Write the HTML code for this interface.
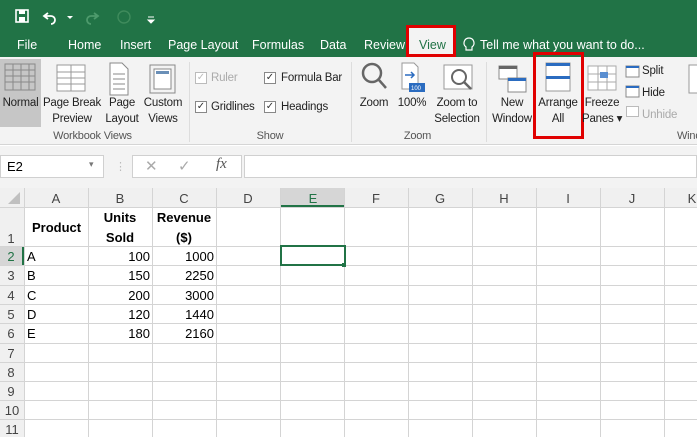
<!DOCTYPE html>
<html><head><meta charset="utf-8"><style>
*{margin:0;padding:0;box-sizing:border-box}
body{width:697px;height:437px;overflow:hidden;position:relative;font-family:"Liberation Sans",Arial,sans-serif;background:#fff}
.a{position:absolute}
.t{position:absolute;color:#fff;font-size:12.5px;top:38px;white-space:nowrap}
.r{position:absolute;font-size:11.5px;color:#222;text-align:center;line-height:16px;white-space:nowrap;letter-spacing:-0.2px}
.g{color:#555;font-size:11px}
.cb{position:absolute;width:12px;height:12px;border:1px solid #888;background:#fff;font-size:10px;line-height:10px;text-align:center;color:#333}
</style></head><body>
<div class="a" style="left:0;top:0;width:697px;height:57px;background:#217346"></div>
<svg class="a" style="left:14px;top:8px" width="150" height="18">
<rect x="2" y="2" width="12" height="12" fill="none" stroke="#fff" stroke-width="1.6"/><rect x="5" y="2" width="6" height="4" fill="#fff"/><rect x="5" y="9" width="6" height="5" fill="#fff"/>
<path d="M34 5 l-4 3 l4 3 M30 8 h7 a4 4 0 0 1 0 8" fill="none" stroke="#fff" stroke-width="1.8"/>
<path d="M53 8 l3 3 l3 -3z" fill="#fff"/>
<path d="M80 5 l4 3 l-4 3 M84 8 h-7 a4 4 0 0 0 0 8" fill="none" stroke="#4d9a6c" stroke-width="1.8"/>
<circle cx="110" cy="9" r="6" fill="none" stroke="#3f8b5c" stroke-width="1.4"/>
<path d="M134 9 h6 M134 12 l3 3 l3 -3z" stroke="#fff" fill="#fff"/>
</svg>
<div class="t" style="left:17px">File</div>
<div class="t" style="left:68px">Home</div>
<div class="t" style="left:120px">Insert</div>
<div class="t" style="left:168px">Page Layout</div>
<div class="t" style="left:252px">Formulas</div>
<div class="t" style="left:320px">Data</div>
<div class="t" style="left:364px">Review</div>
<div class="a" style="left:406px;top:25px;width:50px;height:32px;background:#f3f3f3"></div>
<div class="t" style="left:419px;color:#217346">View</div>
<div class="a" style="left:406px;top:25px;width:50px;height:32px;border:3px solid #e00000"></div>
<svg class="a" style="left:462px;top:37px" width="14" height="16"><path d="M7 1a5 5 0 0 0-3 9v3h6v-3a5 5 0 0 0-3-9z" fill="none" stroke="#fff" stroke-width="1.2"/></svg>
<div class="t" style="left:480px">Tell me what you want to do...</div>
<div class="a" style="left:0;top:57px;width:697px;height:88px;background:#f3f3f3;border-bottom:1px solid #d5d5d5"></div>
<div class="a" style="left:0;top:59px;width:41px;height:68px;background:#c6c6c6"></div>
<svg class="a" style="left:0;top:60px" width="697" height="40">
<g fill="none" stroke="#888"><rect x="5" y="4" width="30" height="26"/><path d="M5 10h30M5 16h30M5 22h30M13 4v26M21 4v26M29 4v26"/></g>
<g fill="none" stroke="#999"><rect x="57" y="5" width="28" height="26" fill="#fff"/><path d="M71 5v26M57 12h28M57 18h28M57 24h28"/></g>
<g fill="none" stroke="#888"><path d="M110 3h12l6 6v26h-18z" fill="#fff"/><path d="M113 14h12M113 19h12M113 24h12M113 29h12"/></g>
<g fill="none" stroke="#888"><rect x="150" y="5" width="25" height="28"/><rect x="154" y="9" width="17" height="20" fill="#fff"/><rect x="156" y="11" width="13" height="3" fill="#6a8fb7" stroke="none"/></g>
<g fill="none" stroke="#666" stroke-width="2.5"><circle cx="372" cy="13" r="9"/><path d="M379 20l7 8"/></g>
<g><path d="M402 3h12l4 4v22h-16z" fill="#fff" stroke="#999"/><path d="M405 15h9m-3-3l3 3l-3 3" stroke="#2b6cc0" fill="none" stroke-width="1.5"/><rect x="409" y="23" width="16" height="9" fill="#2b6cc0"/><text x="411" y="30" font-size="6" fill="#fff" font-family="Liberation Sans">100</text></g>
<g fill="none" stroke="#999"><rect x="444" y="5" width="28" height="24" fill="#fff"/><circle cx="459" cy="17" r="7" stroke="#666" stroke-width="2"/><path d="M464 22l7 7" stroke="#666" stroke-width="2.5"/></g>
<g fill="#fff" stroke="#888"><rect x="499" y="6" width="18" height="13"/><rect x="508" y="18" width="18" height="14"/><rect x="508" y="18" width="18" height="3" fill="#2b6cc0" stroke="none"/><rect x="499" y="6" width="18" height="3" fill="#666" stroke="none"/></g>
<g fill="#fff" stroke="#999"><rect x="546" y="3" width="24" height="28"/><rect x="546" y="3" width="24" height="3" fill="#2b6cc0" stroke="none"/><rect x="546" y="16" width="24" height="3" fill="#2b6cc0" stroke="none"/></g>
<g fill="#fff" stroke="#aaa"><rect x="588" y="6" width="28" height="24"/><path d="M588 14h28M588 22h28M598 6v24M607 6v24"/><rect x="600" y="12" width="8" height="6" fill="#5a8ed0" stroke="none"/></g>
<g fill="#fff" stroke="#888"><rect x="626" y="6" width="13" height="11"/><rect x="626" y="6" width="13" height="2" fill="#2b6cc0" stroke="none"/><rect x="626" y="26" width="13" height="11"/><rect x="626" y="26" width="13" height="2" fill="#2b6cc0" stroke="none"/></g>
<rect x="689" y="5" width="10" height="28" fill="#fff" stroke="#999"/>
</svg>
<div class="a" style="left:626px;top:106px;width:13px;height:11px;border:1px solid #bbb;background:#fff"></div>
<div class="r" style="left:0;top:95px;width:41px">Normal</div>
<div class="r" style="left:41px;top:95px;width:62px">Page Break<br>Preview</div>
<div class="r" style="left:103px;top:95px;width:38px">Page<br>Layout</div>
<div class="r" style="left:141px;top:95px;width:44px">Custom<br>Views</div>
<div class="r g" style="left:40px;top:128px;width:105px">Workbook Views</div>
<div class="a" style="left:189px;top:62px;width:1px;height:80px;background:#ddd"></div>
<div class="cb" style="left:195px;top:72px;border-color:#bbb;color:#bbb">✓</div><div class="r" style="left:211px;top:70px;color:#aaa">Ruler</div>
<div class="cb" style="left:264px;top:72px">✓</div><div class="r" style="left:281px;top:70px">Formula Bar</div>
<div class="cb" style="left:195px;top:101px">✓</div><div class="r" style="left:211px;top:99px">Gridlines</div>
<div class="cb" style="left:264px;top:101px">✓</div><div class="r" style="left:281px;top:99px">Headings</div>
<div class="r g" style="left:250px;top:128px;width:40px">Show</div>
<div class="a" style="left:351px;top:62px;width:1px;height:80px;background:#ddd"></div>
<div class="r" style="left:355px;top:95px;width:38px">Zoom</div>
<div class="r" style="left:396px;top:95px;width:32px">100%</div>
<div class="r" style="left:430px;top:95px;width:54px">Zoom to<br>Selection</div>
<div class="r g" style="left:395px;top:128px;width:45px">Zoom</div>
<div class="a" style="left:486px;top:62px;width:1px;height:80px;background:#ddd"></div>
<div class="r" style="left:487px;top:95px;width:50px">New<br>Window</div>
<div class="r" style="left:536px;top:95px;width:44px">Arrange<br>All</div>
<div class="a" style="left:533px;top:52px;width:51px;height:87px;border:3px solid #e00000"></div>
<div class="r" style="left:582px;top:95px;width:40px">Freeze<br>Panes ▾</div>
<div class="r" style="left:642px;top:63px">Split</div>
<div class="r" style="left:642px;top:85px">Hide</div>
<div class="r" style="left:642px;top:107px;color:#aaa">Unhide</div>
<div class="r g" style="left:677px;top:128px">Wind</div>
<div class="a" style="left:0;top:146px;width:697px;height:42px;background:#f3f3f3"></div>
<div class="a" style="left:0;top:155px;width:104px;height:23px;background:#fff;border:1px solid #d0d0d0;font-size:13px;padding:3px 6px">E2<span style="position:absolute;left:88px;top:3px;font-size:9px;color:#777">▾</span></div>
<div class="a" style="left:115px;top:160px;color:#bbb;font-size:11px">⋮</div>
<div class="a" style="left:132px;top:155px;width:110px;height:23px;background:#fff;border:1px solid #d0d0d0"></div>
<div class="a" style="left:145px;top:157px;color:#aaa;font-size:15px">✕</div>
<div class="a" style="left:178px;top:157px;color:#aaa;font-size:15px">✓</div>
<div class="a" style="left:216px;top:156px;color:#555;font-size:15px;font-style:italic;font-family:'Liberation Serif',serif">fx</div>
<div class="a" style="left:244px;top:155px;width:453px;height:23px;background:#fff;border:1px solid #d0d0d0"></div>
<svg class="a" style="left:0;top:188px" width="697" height="249">
<rect x="0" y="0" width="697" height="19" fill="#f0f0f0"/>
<rect x="0" y="0" width="24" height="249" fill="#f0f0f0"/>
<rect x="281" y="0" width="64" height="19" fill="#d6d6d6"/><rect x="281" y="17" width="64" height="2" fill="#217346"/>
<rect x="0" y="58" width="24" height="19" fill="#d6d6d6"/><rect x="22" y="58" width="2" height="19" fill="#217346"/>
<path d="M20 4 L20 16 L8 16z" fill="#c0c0c0"/>
<g stroke="#d4d4d4" stroke-width="1">
<path d="M24.5 0V249M88.5 0V249M152.5 0V249M216.5 0V249M280.5 0V249M344.5 0V249M408.5 0V249M472.5 0V249M536.5 0V249M600.5 0V249M664.5 0V249"/>
<path d="M0 19.5H697M0 58.5H697M0 77.5H697M0 97.5H697M0 116.5H697M0 135.5H697M0 155.5H697M0 174.5H697M0 193.5H697M0 212.5H697M0 231.5H697"/>
</g>
<rect x="281" y="58" width="64" height="19" fill="none" stroke="#217346" stroke-width="2"/>
<rect x="342" y="75" width="4" height="4" fill="#217346"/>
<g font-family="Liberation Sans" font-size="13" fill="#444" text-anchor="middle">
<text x="56" y="15">A</text><text x="120" y="15">B</text><text x="184" y="15">C</text><text x="248" y="15">D</text><text x="313" y="15" fill="#217346">E</text><text x="376" y="15">F</text><text x="440" y="15">G</text><text x="504" y="15">H</text><text x="568" y="15">I</text><text x="632" y="15">J</text><text x="692" y="15">K</text>
<text x="11" y="55">1</text><text x="11" y="73" fill="#217346">2</text><text x="11" y="92">3</text><text x="11" y="112">4</text><text x="11" y="131">5</text><text x="11" y="150">6</text><text x="11" y="170">7</text><text x="11" y="189">8</text><text x="11" y="208">9</text><text x="12" y="227">10</text><text x="12" y="246">11</text>
</g>
<g font-family="Liberation Sans" font-size="13" fill="#000">
<text x="32" y="44" font-weight="bold">Product</text>
<text x="120" y="34" font-weight="bold" text-anchor="middle">Units</text><text x="120" y="54" font-weight="bold" text-anchor="middle">Sold</text>
<text x="184" y="34" font-weight="bold" text-anchor="middle">Revenue</text><text x="184" y="54" font-weight="bold" text-anchor="middle">($)</text>
<text x="27" y="73">A</text><text x="27" y="92">B</text><text x="27" y="112">C</text><text x="27" y="131">D</text><text x="27" y="150">E</text>
<g text-anchor="end"><text x="150" y="73">100</text><text x="150" y="92">150</text><text x="150" y="112">200</text><text x="150" y="131">120</text><text x="150" y="150">180</text>
<text x="214" y="73">1000</text><text x="214" y="92">2250</text><text x="214" y="112">3000</text><text x="214" y="131">1440</text><text x="214" y="150">2160</text></g>
</g>
</svg>
</body></html>
